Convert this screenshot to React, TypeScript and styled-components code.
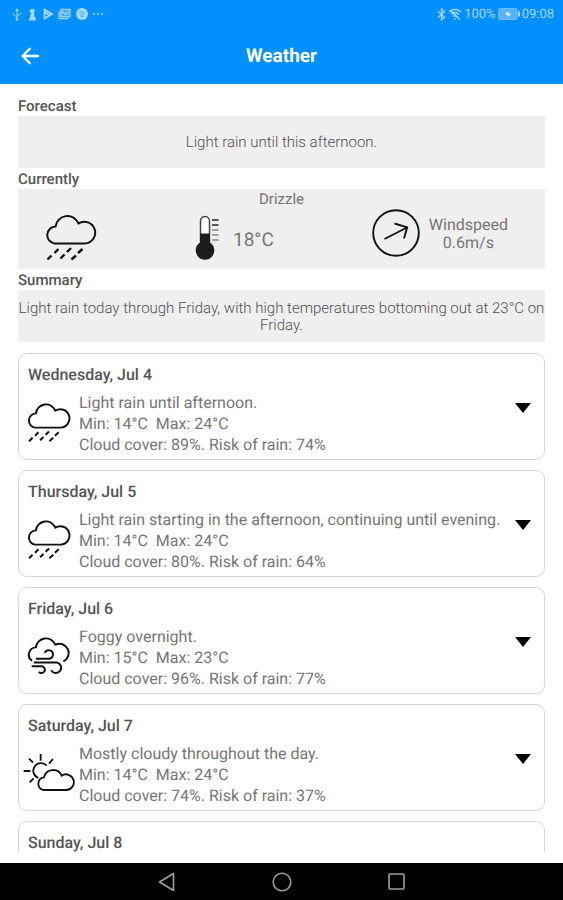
import React, { useState } from "react";
import styled, { createGlobalStyle } from "styled-components";

const GlobalStyle = createGlobalStyle`
  *, *::before, *::after { box-sizing: border-box; }
  body { margin: 0; background: #fff; font-family: Roboto, sans-serif; color: #757575; text-rendering: geometricPrecision; }
  h1, h2, h3, p { margin: 0; }
  button { padding: 0; border: 0; background: none; cursor: pointer; font: inherit; color: inherit; }
  svg { display: block; flex: none; }
`;

const Screen = styled.div`
  display: flex;
  flex-direction: column;
  height: 100vh;
`;

const TopBar = styled.header`
  flex: none;
  background: #0190fc;
  color: #fff;
`;

const StatusBar = styled.div`
  display: flex;
  align-items: center;
  justify-content: space-between;
  height: 28px;
  padding: 0 9px 0 12px;
  color: #a6d8ff;
  font-size: 13px;
`;

const StatusGroup = styled.div<{ $gap: number }>`
  display: flex;
  align-items: center;
  gap: ${(p) => p.$gap}px;
`;

const AppBar = styled.div`
  display: grid;
  grid-template-columns: 60px 1fr 60px;
  align-items: center;
  height: 56px;
`;

const BackButton = styled.button`
  display: flex;
  align-items: center;
  justify-content: center;
  height: 56px;
`;

const Title = styled.h1`
  text-align: center;
  font-size: 19px;
  font-weight: 700;
  line-height: 24px;
`;

const Content = styled.main`
  flex: 1;
  min-height: 0;
  margin-bottom: 11px;
  padding: 11px 18px 0;
  overflow-y: auto;
  scrollbar-width: none;
`;

const Label = styled.h2`
  padding-top: 1px;
  font-size: 15px;
  font-weight: 500;
  line-height: 20px;
  color: #555;
`;

const Panel = styled.div`
  display: flex;
  align-items: center;
  justify-content: center;
  min-height: 52px;
  padding-top: 1px;
  background: #efefef;
  color: #505050;
  text-align: center;
  font-size: 15px;
  font-weight: 300;
  line-height: 17px;
`;

const CurrentPanel = styled.div`
  min-height: 80px;
  background: #efefef;
  text-align: center;
  font-size: 15px;
  line-height: 20px;
`;

const CurrentRow = styled.div`
  display: flex;
  align-items: flex-end;
  justify-content: space-between;
  height: 52px;
  padding: 0 37px 0 27px;
`;

const Reading = styled.div<{ $gap: number }>`
  display: flex;
  align-items: center;
  gap: ${(p) => p.$gap}px;
`;

const WindReading = styled(Reading)`
  align-self: flex-start;
`;

const Temperature = styled.span`
  padding-top: 3px;
  font-size: 19px;
`;

const Wind = styled.p`
  padding-top: 1px;
  font-size: 16px;
  line-height: 18px;
`;

const DayList = styled.div`
  display: flex;
  flex-direction: column;
  gap: 10px;
  padding: 11px 0;
`;

const DayCard = styled.article`
  display: grid;
  grid-template-columns: 60px 1fr 42px;
  row-gap: 5px;
  align-content: start;
  align-items: center;
  min-height: 107px;
  padding: 9px 0 3px;
  border: 1px solid #d6d6d6;
  border-radius: 9px;
`;

const DayTitle = styled.h3`
  grid-column: 1 / 3;
  padding-left: 9px;
  font-size: 16px;
  font-weight: 500;
  line-height: 24px;
  color: #555;
`;

const IconSlot = styled.div`
  display: flex;
  grid-row: 2;
  justify-content: center;
  padding-bottom: 4px;
`;

const DayText = styled.div`
  grid-row: 2;
  font-size: 16px;
  line-height: 21px;
  white-space: pre-wrap;
`;

const ExpandButton = styled.button`
  display: flex;
  grid-column: 3;
  grid-row: 1 / 3;
  align-items: center;
  justify-content: center;
  height: 42px;
  padding-bottom: 2px;
`;

const NavBar = styled.nav`
  display: flex;
  flex: none;
  align-items: center;
  justify-content: center;
  gap: 75px;
  height: 37px;
  background: #000;
`;

const NavButton = styled.button`
  display: flex;
  align-items: center;
  justify-content: center;
  width: 40px;
  height: 37px;
`;

type Weather = "rain" | "fog" | "partly";

function RainIcon({ width }: { width: number }) {
  return (
    <svg width={width} viewBox="0.5 0 52 49" fill="none" stroke="#111" strokeWidth={width > 48 ? 2 : 2.3}>
      <path d="M10 31.5H40.500A10.900 10.900 0 1 0 34 11.400A12 12 0 0 0 11 14.600A8.500 8.500 0 0 0 10 31.500Z" />
      <path d="M14 37L10 41M7 43.500L3 47.500M26.500 36L22.500 40M20 42.500L16 46.500M38 37L33.500 41M31.500 43.500L27 47.500" strokeWidth="2.400" />
    </svg>
  );
}

function FogIcon() {
  return (
    <svg width="44" viewBox="0.5 0 52 49" fill="none" stroke="#111" strokeWidth="2.300">
      <path d="M6.500 30.500A8.700 8.700 0 0 1 11 14.600A12 12 0 0 1 34 11.400A10.900 10.900 0 0 1 43.500 31.200" />
      <path d="M11 28H26A5 5 0 1 0 21.500 21.200M8.500 32.500H36A6.300 6.300 0 1 1 29 41.500M6 37H18A4 4 0 1 1 14.500 43.500" />
    </svg>
  );
}

function PartlyIcon() {
  return (
    <svg width="52" viewBox="8 37 156 116" fill="none" stroke="#111" strokeWidth="5.500">
      <path d="M68 148H138A23.500 23.500 0 1 0 124 105A28 28 0 0 0 71 110A19.500 19.500 0 0 0 68 148Z" />
      <path d="M54 112A23 23 0 1 1 79 75" />
      <path d="M61 40V60M26 54L38 66M10 91H30M40 113L28 125M98 55L86 69" />
    </svg>
  );
}

function WeatherIcon({ kind }: { kind: Weather }) {
  if (kind === "fog") return <FogIcon />;
  if (kind === "partly") return <PartlyIcon />;
  return <RainIcon width={44} />;
}

function Thermometer() {
  return (
    <svg width="24" height="46" viewBox="0 0 24 46">
      <path d="M5.500 27V6A4.500 4.500 0 0 1 14.500 6V27" fill="#fff" stroke="#444" strokeWidth="1.500" />
      <path d="M5 18.500H15V27.500A9.300 9.300 0 1 1 5 27.500Z" fill="#1c1c1c" />
      <path d="M17 5H23.500M17 10H23.500" stroke="#222" strokeWidth="1.500" />
      <path d="M17 15H23.500M17 20H23.500M17 25H23.500" stroke="#888" strokeWidth="1.500" />
    </svg>
  );
}

function WindIcon() {
  return (
    <svg width="48" height="48" viewBox="0 0 48 48" fill="none" stroke="#111" strokeWidth="1.900">
      <circle cx="24" cy="24" r="22.800" />
      <path d="M12.500 30L35 18.500M22.500 14.500L35.200 18.300L32 29.500" />
    </svg>
  );
}

function LeftStatusIcons() {
  return (
    <StatusGroup $gap={5} aria-hidden="true">
      <svg width="10" height="13" viewBox="0 0 10 13" fill="none" stroke="currentColor">
        <path d="M5 2V11M5 9L1.500 7V5M5 8L8.500 6V4" />
        <path d="M5 0L7 3H3Z" fill="currentColor" stroke="none" />
        <circle cx="5" cy="11.500" r="1.300" fill="currentColor" stroke="none" />
      </svg>
      <svg width="11" height="13" viewBox="-1 0 11 13" fill="currentColor">
        <path d="M2.500 1H6.500V4L6 5L7 10H8V12.500H1V10H2L3 5L1.500 3.500Z" />
      </svg>
      <svg width="10" height="12" viewBox="0 0 10 12" fill="none" stroke="currentColor" strokeWidth="1.700">
        <path d="M1.500 1.500L9 6L1.500 10.500ZM2 4L6 7" />
      </svg>
      <svg width="13" height="12" viewBox="0 0 14 12" fill="none" stroke="currentColor" strokeWidth="1.300">
        <path d="M1 3V11H11" />
        <rect x="3" y="1" width="10" height="8" fill="currentColor" fillOpacity=".4" />
        <path d="M4 3L8 6.500L12 3" />
      </svg>
      <svg width="12" height="12" viewBox="0 0 12 12">
        <circle cx="6" cy="6" r="6" fill="currentColor" />
        <path d="M3 4.500C5 3.700 7 3.700 9 5M3.500 6.500C5 6 7 6 8.500 7M4 8.300C5.500 8 6.500 8 8 8.800" fill="none" stroke="#4fb2fd" />
      </svg>
      <svg width="10" height="12" viewBox="0 0 10 12" fill="currentColor">
        <circle cx="1" cy="6" r="1" /><circle cx="5" cy="6" r="1" /><circle cx="9" cy="6" r="1" />
      </svg>
    </StatusGroup>
  );
}

function RightStatusIcons() {
  return (
    <StatusGroup $gap={2}>
      <svg width="9" height="13" viewBox="0 0 9 13" fill="none" stroke="currentColor" strokeWidth="1.300" aria-hidden="true">
        <path d="M1 3.500L7.500 9.300L4.500 12V1L7.500 3.700L1 9.500" />
      </svg>
      <svg width="14" height="12" viewBox="0 0 14 12" fill="none" stroke="currentColor" strokeWidth="1.500" aria-hidden="true">
        <path d="M1 4C4.500 .7 9.500 .7 13 4M3 6.300C5.500 4 8.500 4 11 6.300M5 8.500C6.300 7.400 7.700 7.400 9 8.500M2 2L12 11.500M7 10V11.500" />
      </svg>
      <span>100%</span>
      <svg width="22" height="12" viewBox="0 0 22 12" aria-hidden="true">
        <rect x=".600" y=".600" width="18.500" height="10.800" rx="1.500" fill="currentColor" fillOpacity=".5" stroke="currentColor" strokeOpacity=".6" />
        <rect x="20" y="3.500" width="2" height="5" fill="currentColor" />
        <path d="M6.500 6L10.500 3.500V5.500L13.500 6L9.500 8.500V6.500Z" fill="#fff" />
      </svg>
      <span>09:08</span>
    </StatusGroup>
  );
}

interface Day {
  date: string;
  text: string;
  min: number;
  max: number;
  cloud: number;
  rain: number;
  kind: Weather;
}

const days: Day[] = [
  { date: "Wednesday, Jul 4", text: "Light rain until afternoon.", min: 14, max: 24, cloud: 89, rain: 74, kind: "rain" },
  { date: "Thursday, Jul 5", text: "Light rain starting in the afternoon, continuing until evening.", min: 14, max: 24, cloud: 80, rain: 64, kind: "rain" },
  { date: "Friday, Jul 6", text: "Foggy overnight.", min: 15, max: 23, cloud: 96, rain: 77, kind: "fog" },
  { date: "Saturday, Jul 7", text: "Mostly cloudy throughout the day.", min: 14, max: 24, cloud: 74, rain: 37, kind: "partly" },
];

function DayForecast({ day }: { day: Day }) {
  const [open, setOpen] = useState(false);
  return (
    <DayCard>
      <DayTitle>{day.date}</DayTitle>
      <IconSlot><WeatherIcon kind={day.kind} /></IconSlot>
      <DayText>
        <p>{day.text}</p>
        <p>{`Min: ${day.min}°C  Max: ${day.max}°C`}</p>
        <p>{`Cloud cover: ${day.cloud}%. Risk of rain: ${day.rain}%`}</p>
      </DayText>
      <ExpandButton aria-label={`Details for ${day.date}`} aria-expanded={open} onClick={() => setOpen(!open)}>
        <svg width="16" height="10" viewBox="0 0 16 10"><path d={open ? "M0 10H16L8 0Z" : "M0 0H16L8 10Z"} fill="#000" /></svg>
      </ExpandButton>
    </DayCard>
  );
}

export default function App() {
  return (
    <Screen>
      <GlobalStyle />
      <TopBar>
        <StatusBar>
          <LeftStatusIcons />
          <RightStatusIcons />
        </StatusBar>
        <AppBar>
          <BackButton aria-label="Back">
            <svg width="18" height="18" viewBox="0 0 18 18" fill="none" stroke="#fff" strokeWidth="2.300">
              <path d="M18 9H2M9.500 1L1.600 9L9.500 17" />
            </svg>
          </BackButton>
          <Title>Weather</Title>
        </AppBar>
      </TopBar>
      <Content>
        <Label>Forecast</Label>
        <Panel>Light rain until this afternoon.</Panel>
        <Label>Currently</Label>
        <CurrentPanel>
          <p>Drizzle</p>
          <CurrentRow>
            <RainIcon width={52} />
            <Reading $gap={14}>
              <Thermometer />
              <Temperature>18°C</Temperature>
            </Reading>
            <WindReading $gap={9}>
              <WindIcon />
              <Wind>Windspeed<br />0.6m/s</Wind>
            </WindReading>
          </CurrentRow>
        </CurrentPanel>
        <Label>Summary</Label>
        <Panel>Light rain today through Friday, with high temperatures bottoming out at 23°C on Friday.</Panel>
        <DayList>
          {days.map((day) => <DayForecast key={day.date} day={day} />)}
          <DayCard>
            <DayTitle>Sunday, Jul 8</DayTitle>
          </DayCard>
        </DayList>
      </Content>
      <NavBar aria-label="System">
        <NavButton aria-label="Back">
          <svg width="17" height="20" viewBox="0 0 17 20" fill="none" stroke="#a0a0a0" strokeWidth="1.600"><path d="M15.500 1.500V18.500L1.500 10Z" strokeLinejoin="round" /></svg>
        </NavButton>
        <NavButton aria-label="Home">
          <svg width="20" height="20" viewBox="0 0 20 20" fill="none" stroke="#a0a0a0" strokeWidth="1.600"><circle cx="10" cy="10" r="8.800" /></svg>
        </NavButton>
        <NavButton aria-label="Recent apps">
          <svg width="17" height="17" viewBox="0 0 17 17" fill="none" stroke="#a0a0a0" strokeWidth="1.600"><rect x="1" y="1" width="15" height="15" rx="1" /></svg>
        </NavButton>
      </NavBar>
    </Screen>
  );
}
